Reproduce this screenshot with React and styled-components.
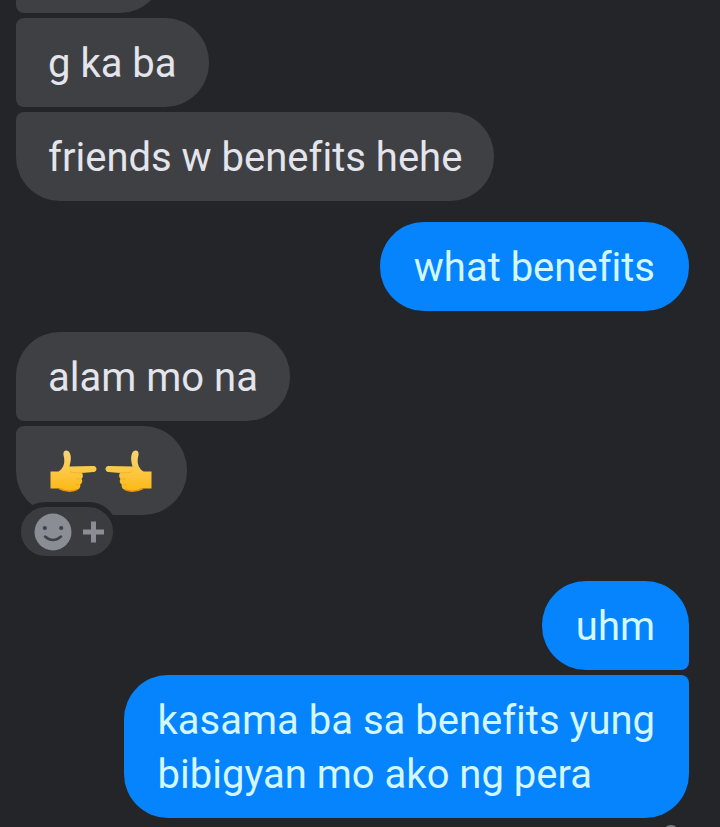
import React from "react";
import styled, { createGlobalStyle, css } from "styled-components";

const PAGE = "#242528";

const GlobalStyle = createGlobalStyle`
  *, *::before, *::after { box-sizing: border-box; }
  html { background: ${PAGE}; }
  body {
    margin: 0;
    background: ${PAGE};
    font-family: Roboto, "Liberation Sans", sans-serif;
    overflow: hidden;
  }
`;

const Thread = styled.main`
  display: flex;
  flex-direction: column;
  gap: 21px;
  min-height: 100vh;
  padding: 0 31px 0 16px;
  overflow: hidden;
`;

const Group = styled.section`
  display: flex;
  flex-direction: column;
  align-items: ${(p) => (p.$mine ? "flex-end" : "flex-start")};
  gap: 5px;
  margin-top: ${(p) => (p.$scrolled ? "-76px" : "0")};
`;

const squareTop = css`
  ${(p) => (p.$mine ? "border-top-right-radius: 8px;" : "border-top-left-radius: 8px;")}
`;
const squareBottom = css`
  ${(p) => (p.$mine ? "border-bottom-right-radius: 8px;" : "border-bottom-left-radius: 8px;")}
`;

const Bubble = styled.div`
  min-width: ${(p) => (p.$empty ? "148px" : "0")};
  min-height: 89px;
  max-width: 600px;
  padding: ${(p) => (p.$mine ? "19px 34px 16px" : "19px 32px 16px")};
  border-radius: 44px;
  background: ${(p) => (p.$mine ? "#0584fe" : "#3f4043")};
  color: ${(p) => (p.$mine ? "#d2f7ff" : "#e4e5ec")};
  font-size: 40px;
  line-height: 54px;
  font-variant-ligatures: none;
  white-space: pre-line;
  ${(p) => p.$joinTop && squareTop}
  ${(p) => p.$joinBottom && squareBottom}
`;

const Reacted = styled.div`
  position: relative;
  margin-bottom: 45px;
`;

const Hands = styled.span`
  display: flex;
  align-items: center;
  gap: 6px;
  height: 51px;
  padding: 0 2px 0 1px;
`;

const HandSvg = styled.svg`
  display: block;
  width: 49px;
  height: 44px;
`;

const AddReaction = styled.button`
  position: absolute;
  left: 0;
  bottom: -46px;
  display: flex;
  align-items: center;
  gap: 11px;
  height: 59px;
  margin: 0;
  padding: 0 9px 0 13px;
  border: 5px solid ${PAGE};
  border-radius: 30px;
  background: #3b3c40;
  cursor: pointer;
`;

const Receipt = styled.footer`
  display: flex;
  justify-content: flex-end;
  margin-top: -14px;
  padding-right: 10px;
`;

const Avatar = styled.span`
  width: 16px;
  height: 16px;
  border-radius: 50%;
  background: #77787c;
`;

function Hand({ left }) {
  return (
    <HandSvg viewBox="0 0 49 44" aria-hidden="true">
      <defs>
        <linearGradient id={left ? "skinL" : "skinR"} x1="0" y1="0" x2="0" y2="1">
          <stop offset="0" stopColor="#f8d27a" />
          <stop offset="0.45" stopColor="#fbc94b" />
          <stop offset="1" stopColor="#fdb813" />
        </linearGradient>
      </defs>
      <g transform={left ? "translate(49 0) scale(-1 1)" : undefined}>
        <path
          fill={left ? "url(#skinL)" : "url(#skinR)"}
          d="M1.5 22.5 H9.5 C13.5 20 17 15 14.5 6 C13.5 .8 19 .2 20.8 4 C22.8 9 21.5 13 20.5 17.5 L44.5 17 C48.5 17 48.5 23 44.5 23 L33 24 C34.5 26 34 28.5 32.5 30 C34 32 33 34.5 31.2 35.5 C32 38.5 29.5 41 27 41 C23 43 15 42.5 10 39.5 H1.5 Z"
        />
        <path
          d="M21 22.5 Q24 24.5 34 23.7 M31.5 30 H27.5 M30 35.5 H26.5"
          fill="none"
          stroke="#e59f18"
          strokeWidth="1"
          opacity=".5"
        />
        <path d="M10 39.5 C17 43 24 42.5 28 40.7" fill="none" stroke="#e79112" strokeWidth="1.4" />
      </g>
    </HandSvg>
  );
}

function Smile() {
  return (
    <svg width="38" height="38" viewBox="0 0 38 38" aria-hidden="true">
      <circle cx="19" cy="19" r="18.5" fill="#8b8d94" />
      <circle cx="10.8" cy="15" r="2.1" fill="#3f4147" />
      <circle cx="27.2" cy="15" r="2.1" fill="#3f4147" />
      <path
        d="M11 23.5 Q19 30.5 27 23.5"
        fill="none"
        stroke="#3f4147"
        strokeWidth="2.4"
        strokeLinecap="round"
      />
    </svg>
  );
}

function Plus() {
  return (
    <svg width="21" height="22" viewBox="0 0 21 22" aria-hidden="true">
      <path d="M10.5 .5 V21.5 M0 11 H21" stroke="#8b8d94" strokeWidth="5" />
    </svg>
  );
}

export default function App() {
  return (
    <>
      <GlobalStyle />
      <Thread>
        <Group $scrolled>
          <Bubble $empty $joinTop $joinBottom />
          <Bubble $joinTop $joinBottom>g ka ba</Bubble>
          <Bubble $joinTop>friends w benefits hehe</Bubble>
        </Group>
        <Group $mine>
          <Bubble $mine>what benefits</Bubble>
        </Group>
        <Group>
          <Bubble $joinBottom>alam mo na</Bubble>
          <Reacted>
            <Bubble $joinTop>
              <Hands role="img" aria-label="Two hands pointing at each other">
                <Hand />
                <Hand left />
              </Hands>
            </Bubble>
            <AddReaction type="button" aria-label="Add reaction">
              <Smile />
              <Plus />
            </AddReaction>
          </Reacted>
        </Group>
        <Group $mine>
          <Bubble $mine $joinBottom>uhm</Bubble>
          <Bubble $mine $joinTop>{"kasama ba sa benefits yung\nbibigyan mo ako ng pera"}</Bubble>
        </Group>
        <Receipt>
          <Avatar />
        </Receipt>
      </Thread>
    </>
  );
}
